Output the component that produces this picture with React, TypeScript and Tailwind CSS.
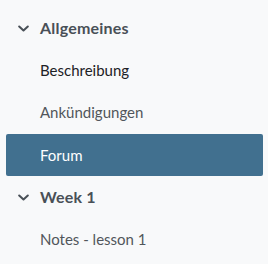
const Chevron = () => (
  <svg viewBox="0 0 12 7" width="11" height="7" className="shrink-0" fill="none">
    <path d="M1.3 1.3 L6 5.7 L10.7 1.3" stroke="#495057" strokeWidth="2.2" strokeLinecap="round" strokeLinejoin="round" />
  </svg>
);

const Section = ({ title }: { title: string }) => (
  <div className="h-[42px] flex items-center">
    <div className="ml-[18px] w-[22px] flex items-center">
      <Chevron />
    </div>
    <span className="font-bold text-[16px] tracking-[0.2px] text-[#495057]">{title}</span>
  </div>
);

const Item = ({ label, active, dark }: { label: string; active?: boolean; dark?: boolean }) => (
  <div
    className={
      active
        ? 'h-[42px] ml-[6px] mr-[5px] rounded-[2px] bg-[#41708f] text-white flex items-center pl-[34px]'
        : `h-[42px] flex items-center pl-[40px] ${dark ? 'text-[#1d2125]' : 'text-[#51565b]'}`
    }
  >
    {label}
  </div>
);

export default function App() {
  return (
    <div
      className="w-[268px] h-[264px] bg-[#f8f9fa] pt-[7px] text-[15px] overflow-hidden"
      style={{ fontFamily: 'Lato, "Noto Sans", sans-serif' }}
    >
      <Section title="Allgemeines" />
      <Item label="Beschreibung" dark />
      <Item label="Ankündigungen" />
      <div className="h-px" />
      <Item label="Forum" active />
      <Section title="Week 1" />
      <Item label="Notes - lesson 1" />
    </div>
  );
}
